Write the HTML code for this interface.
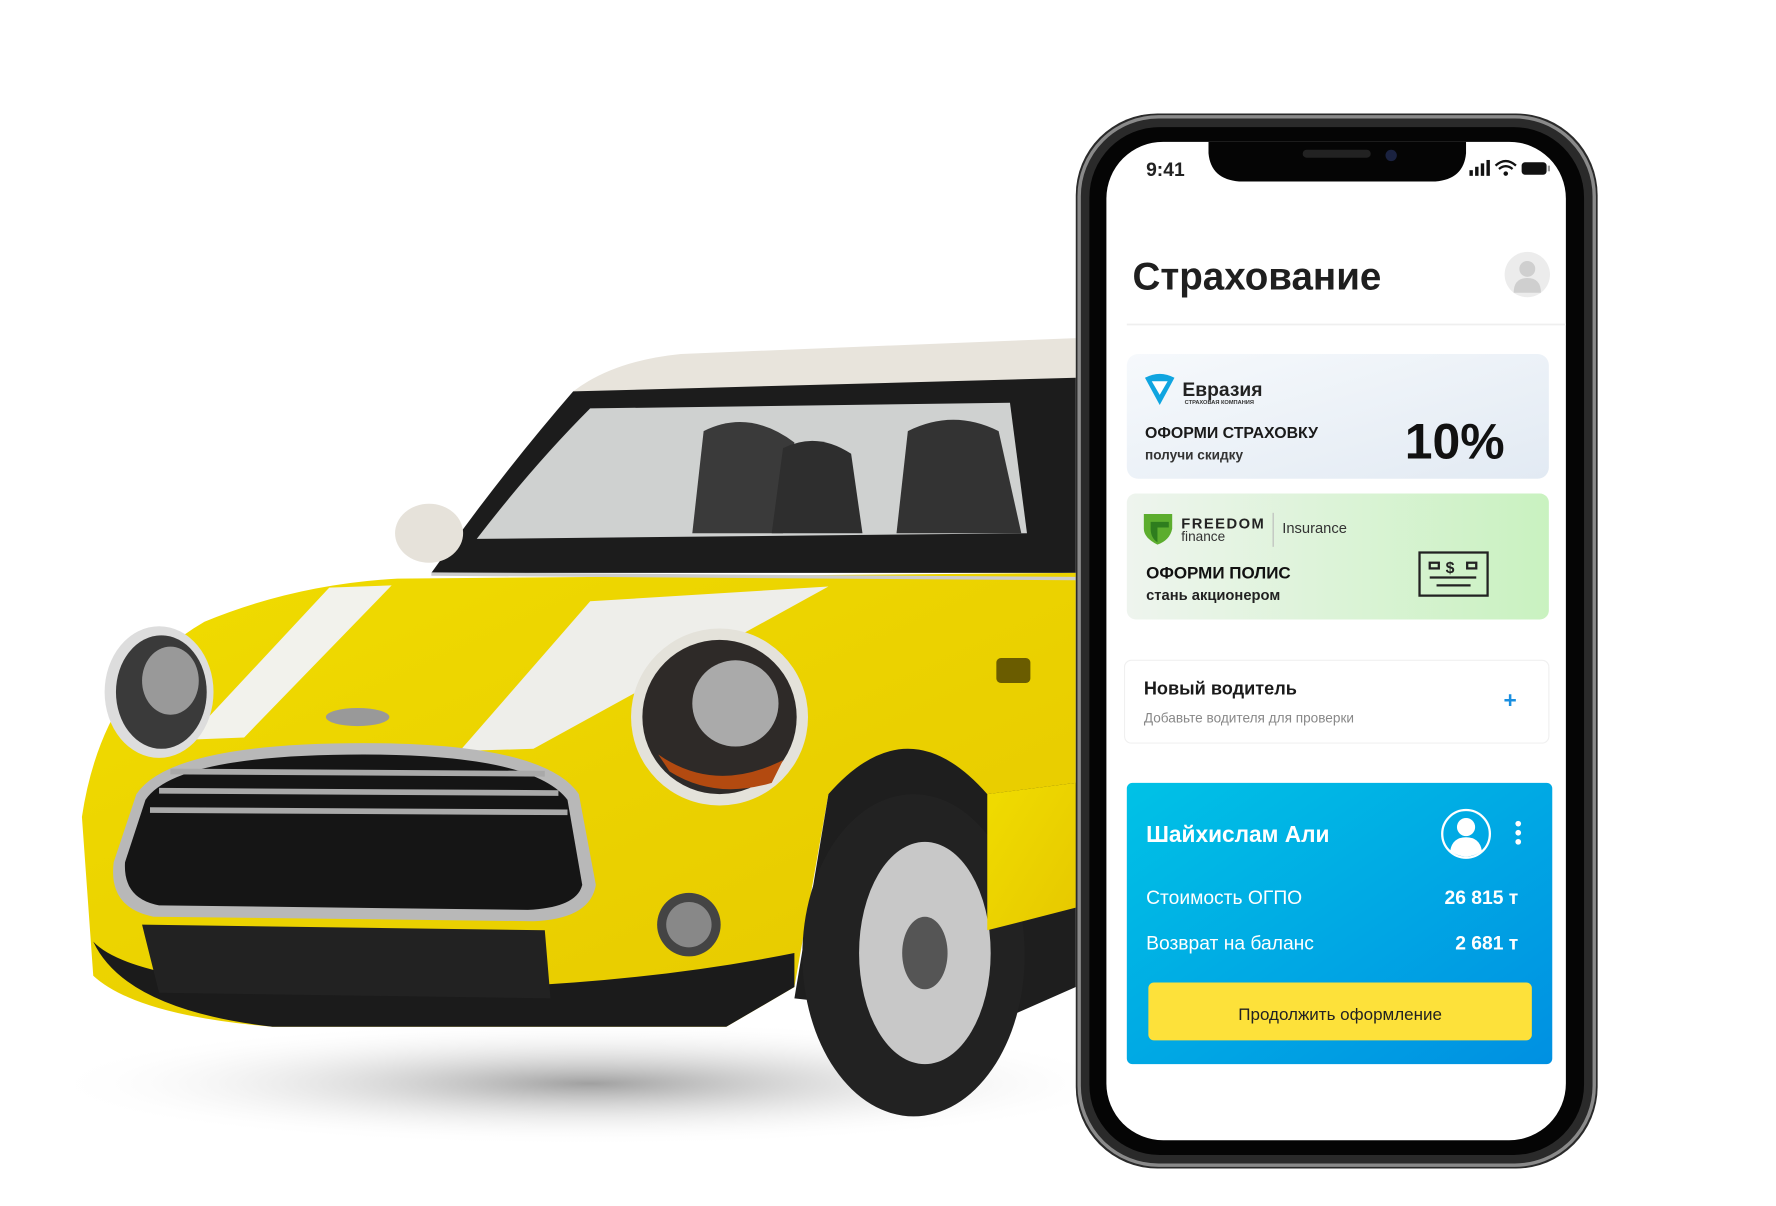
<!DOCTYPE html>
<html><head><meta charset="utf-8"><style>
html,body{margin:0;padding:0;background:#fff;width:1776px;height:1206px;overflow:hidden}
svg{display:block}
text{font-family:"Liberation Sans","DejaVu Sans",sans-serif}
</style></head><body>
<svg width="1776" height="1206" viewBox="0 0 1565 1063" xmlns="http://www.w3.org/2000/svg">
<defs>
<linearGradient id="c1" x1="0" y1="0" x2="1" y2="1"><stop offset="0" stop-color="#f6f9fc"/><stop offset="1" stop-color="#e2eaf3"/></linearGradient>
<linearGradient id="c2" x1="0" y1="0" x2="1" y2="0"><stop offset="0" stop-color="#eef4ee"/><stop offset="1" stop-color="#c9f2c0"/></linearGradient>
<linearGradient id="bl" x1="0" y1="0" x2="1" y2="1"><stop offset="0" stop-color="#00c2e6"/><stop offset="1" stop-color="#0090e2"/></linearGradient>
<linearGradient id="ye" x1="0" y1="0" x2="1" y2="1"><stop offset="0" stop-color="#f0dc00"/><stop offset="1" stop-color="#e6c800"/></linearGradient>
<radialGradient id="sh" cx="0.5" cy="0.5" r="0.5"><stop offset="0" stop-color="#777" stop-opacity=".7"/><stop offset="1" stop-color="#fff" stop-opacity="0"/></radialGradient>
</defs>
<ellipse cx="520" cy="955" rx="480" ry="55" fill="url(#sh)"/>
<path d="M505 345 Q540 318 600 312 L948 298 L948 335 L510 348 Z" fill="#e8e4dc"/>
<path d="M505 345 L948 333 L948 505 L380 505 Q440 420 505 345 Z" fill="#1c1c1c"/>
<path d="M520 360 L890 355 L905 470 L420 475 Q470 410 520 360 Z" fill="#cfd1d0"/>
<path d="M620 380 Q660 360 700 390 L690 470 L610 470 Z" fill="#3a3a3a"/>
<path d="M690 395 Q720 380 750 400 L760 470 L680 470 Z" fill="#2e2e2e"/>
<path d="M800 380 Q840 360 880 380 L900 470 L790 470 Z" fill="#333"/>
<ellipse cx="378" cy="470" rx="30" ry="26" fill="#e6e2da"/>
<path d="M350 510 L948 505 L948 800 L870 820 L870 700 Q800 640 730 700 L700 870 L640 905 L240 905 Q120 895 82 860 L72 720 Q90 600 180 548 Q260 515 350 510 Z" fill="url(#ye)"/>
<path d="M290 518 L345 516 L215 650 L165 652 Z" fill="#f2f2ec"/>
<path d="M520 530 L730 517 L470 660 L405 662 Z" fill="#eeeeea"/>
<path d="M380 506 L948 510" stroke="#ccc" stroke-width="3"/>
<path d="M82 830 Q110 890 240 905 L640 905 L700 870 L700 840 Q500 880 240 870 Q110 860 82 830Z" fill="#1b1b1b"/>
<path d="M125 815 L480 820 L485 880 L140 875 Z" fill="#222"/>
<path d="M120 700 Q150 655 320 655 Q480 655 510 700 L525 780 Q520 810 470 812 L135 808 Q95 800 100 760 Z" fill="#b8b8b8"/>
<path d="M128 705 Q155 665 320 665 Q470 665 500 705 L513 780 Q508 800 465 802 L140 798 Q108 792 110 760 Z" fill="#151515"/>
<g stroke="#a9a9a9" stroke-width="5"><line x1="150" y1="680" x2="480" y2="682"/><line x1="140" y1="697" x2="492" y2="699"/><line x1="132" y1="714" x2="500" y2="716"/></g>
<ellipse cx="315" cy="632" rx="28" ry="8" fill="#999"/>
<ellipse cx="140" cy="610" rx="48" ry="58" fill="#ddd"/>
<ellipse cx="142" cy="610" rx="40" ry="50" fill="#3a3a3a"/>
<ellipse cx="150" cy="600" rx="25" ry="30" fill="#999"/>
<circle cx="634" cy="632" r="78" fill="#e4e2da"/>
<circle cx="634" cy="632" r="68" fill="#2e2a28"/>
<circle cx="648" cy="620" r="38" fill="#aaa"/>
<path d="M580 665 Q630 700 690 670 L680 690 Q630 705 590 680Z" fill="#b34a10"/>
<circle cx="607" cy="815" r="28" fill="#444"/><circle cx="607" cy="815" r="20" fill="#888"/>
<path d="M700 880 L730 700 Q800 620 870 700 L948 690 L948 870 L880 900 Z" fill="#1e1e1e"/>
<ellipse cx="805" cy="842" rx="98" ry="142" fill="#222"/>
<ellipse cx="815" cy="840" rx="58" ry="98" fill="#c8c8c8"/>
<ellipse cx="815" cy="840" rx="20" ry="32" fill="#555"/>
<path d="M870 700 L948 690 L948 800 L870 820Z" fill="url(#ye)"/>
<rect x="878" y="580" width="30" height="22" rx="4" fill="#6a5c00"/>
<rect x="948" y="100" width="460" height="930" rx="72" fill="#2a2a2a"/>
<rect x="951" y="103" width="454" height="924" rx="70" fill="none" stroke="#8a8a8a" stroke-width="3"/>
<rect x="960" y="112" width="436" height="906" rx="62" fill="#050505"/>
<rect x="975" y="125" width="405" height="880" rx="50" fill="#fff"/>
<path d="M1065 125 L1292 125 L1292 135 Q1290 158 1265 160 L1092 160 Q1067 158 1065 135 Z" fill="#050505"/>
<rect x="1148" y="132" width="60" height="7" rx="3.5" fill="#222"/>
<circle cx="1226" cy="137" r="5" fill="#1a2240"/>
<text x="1010" y="155" font-size="17" font-weight="bold" fill="#222">9:41</text>
<g fill="#111"><rect x="1295" y="150" width="3" height="5"/><rect x="1300" y="147" width="3" height="8"/><rect x="1305" y="144" width="3" height="11"/><rect x="1310" y="141" width="3" height="14"/></g>
<path d="M1318 146 Q1327 138 1336 146 M1321 149 Q1327 144 1333 149" stroke="#111" stroke-width="2" fill="none"/><circle cx="1327" cy="153" r="2" fill="#111"/>
<rect x="1341" y="143" width="22" height="11" rx="3" fill="#111"/><rect x="1364" y="146" width="2" height="5" fill="#999"/>
<text x="998" y="255" font-size="34" font-weight="bold" fill="#1f1f1f">Страхование</text>
<circle cx="1346" cy="242" r="20" fill="#ececec"/>
<circle cx="1346" cy="237" r="7" fill="#cfcfcf"/><path d="M1334 258 Q1334 245 1346 245 Q1358 245 1358 258Z" fill="#cfcfcf"/>
<line x1="993" y1="286" x2="1380" y2="286" stroke="#efefef" stroke-width="1.5"/>
<rect x="993" y="312" width="372" height="110" rx="10" fill="url(#c1)"/>
<path d="M1009 333 Q1022 326 1035 333 L1022 357 Z" fill="#10a5e0"/><path d="M1015 336 L1029 336 L1022 348Z" fill="#fff"/>
<text x="1042" y="349" font-size="17" font-weight="bold" fill="#222" font-family="Liberation Serif,serif">Евразия</text>
<text x="1044" y="356" font-size="5" fill="#333" font-weight="bold">СТРАХОВАЯ  КОМПАНИЯ</text>
<text x="1009" y="386" font-size="14" font-weight="bold" fill="#1a1a1a">ОФОРМИ СТРАХОВКУ</text>
<text x="1009" y="405" font-size="12" font-weight="bold" fill="#333">получи скидку</text>
<text x="1238" y="404" font-size="44" font-weight="bold" fill="#111">10%</text>
<rect x="993" y="435" width="372" height="111" rx="8" fill="url(#c2)"/>
<path d="M1008 453 L1033 453 L1033 466 Q1031 476 1020 480 Q1008 474 1008 466Z" fill="#5cad2e"/><path d="M1014 460 L1030 460 L1030 465 L1020 465 L1020 478 Q1014 474 1014 466Z" fill="#2e7d1e"/>
<text x="1041" y="466" font-size="13" font-weight="bold" fill="#222" letter-spacing="1.3">FREEDOM</text>
<text x="1041" y="477" font-size="12" fill="#333">finance</text>
<line x1="1122" y1="452" x2="1122" y2="482" stroke="#bbb"/>
<text x="1130" y="470" font-size="13" fill="#333">Insurance</text>
<text x="1010" y="510" font-size="15" font-weight="bold" fill="#111">ОФОРМИ ПОЛИС</text>
<text x="1010" y="529" font-size="13" font-weight="bold" fill="#222">стань акционером</text>
<g fill="none" stroke="#222" stroke-width="2"><rect x="1251" y="487" width="60" height="38"/><rect x="1260" y="496" width="8" height="5"/><rect x="1293" y="496" width="8" height="5"/><line x1="1260" y1="509" x2="1301" y2="509"/><line x1="1266" y1="516" x2="1296" y2="516"/></g>
<text x="1274" y="505" font-size="14" font-weight="bold" fill="#222">$</text>
<rect x="991" y="582" width="374" height="73" rx="6" fill="#fff" stroke="#f0f0f0"/>
<text x="1008" y="612" font-size="16" font-weight="bold" fill="#1a1a1a">Новый водитель</text>
<text x="1008" y="637" font-size="12" fill="#888">Добавьте водителя для проверки</text>
<text x="1325" y="624" font-size="20" font-weight="bold" fill="#1a8fe0">+</text>
<rect x="993" y="690" width="375" height="248" rx="5" fill="url(#bl)"/>
<text x="1010" y="742" font-size="20" font-weight="bold" fill="#fff">Шайхислам Али</text>
<circle cx="1292" cy="735" r="21" fill="none" stroke="#fff" stroke-width="2"/>
<circle cx="1292" cy="729" r="8" fill="#fff"/><path d="M1278 750 Q1280 738 1292 738 Q1304 738 1306 750 Q1292 760 1278 750Z" fill="#fff"/>
<g fill="#fff"><circle cx="1338" cy="726" r="2.5"/><circle cx="1338" cy="734" r="2.5"/><circle cx="1338" cy="742" r="2.5"/></g>
<text x="1010" y="797" font-size="17" fill="#fff">Стоимость ОГПО</text>
<text x="1338" y="797" font-size="17" font-weight="bold" fill="#fff" text-anchor="end">26 815 т</text>
<text x="1010" y="837" font-size="17" fill="#fff">Возврат на баланс</text>
<text x="1338" y="837" font-size="17" font-weight="bold" fill="#fff" text-anchor="end">2 681 т</text>
<rect x="1012" y="866" width="338" height="51" rx="5" fill="#fde13a"/>
<text x="1181" y="899" font-size="15" fill="#222" text-anchor="middle">Продолжить оформление</text>
</svg>
</body></html>
